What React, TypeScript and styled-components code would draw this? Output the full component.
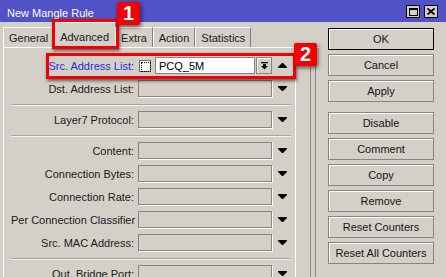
import React from 'react';
import styled, { createGlobalStyle } from 'styled-components';

const Global = createGlobalStyle`
  html, body { margin: 0; padding: 0; background: #d4d0c8; }
  body { font-family: "Liberation Sans", Arial, sans-serif; font-size: 11px; }
  * { box-sizing: border-box; }
`;

const Window = styled.div`
  position: relative;
  width: 446px;
  height: 277px;
  overflow: hidden;
  background: #d4d0c8;
  display: flex;
  flex-direction: column;
`;

const TitleBar = styled.div`
  flex: none;
  height: 22px;
  background: #5151c8;
  color: #fff;
  display: flex;
  align-items: center;
  padding: 0 8px 0 7px;
`;

const Title = styled.div`
  flex: 1;
  font-size: 11px;
  padding-top: 4px;
`;

const WinButtons = styled.div`
  display: flex;
  gap: 4px;
  margin-top: 1px;
`;

const WinButton = styled.div`
  width: 14px;
  height: 13px;
  background: #d4d0c8;
  border: 1px solid #000;
  display: flex;
  align-items: center;
  justify-content: center;
`;

const Body = styled.div`
  flex: 1;
  display: flex;
  padding-left: 3px;
  min-height: 0;
`;

const LeftCol = styled.div`
  width: 316px;
  display: flex;
  flex-direction: column;
`;

const TabStrip = styled.div`
  height: 25px;
  display: flex;
  align-items: flex-end;
  position: relative;
  z-index: 1;
`;

const Tab = styled.div<{ $active?: boolean }>`
  height: ${(p) => (p.$active ? '26px' : '20px')};
  margin: ${(p) => (p.$active ? '0 -1px -1px -1px' : '0')};
  padding: ${(p) => (p.$active ? '3px 6px 0' : '1px 5px 0')};
  border-top: 1px solid #fff;
  border-left: 1px solid #fff;
  border-right: 1px solid #808080;
  background: #d4d0c8;
  color: #1a1a1a;
  display: flex;
  align-items: center;
  white-space: nowrap;
  font-size: 11px;
`;

const Panel = styled.div`
  flex: 1;
  display: flex;
  border-top: 1px solid #fff;
  border-left: 1px solid #fff;
  min-height: 0;
`;

const FormArea = styled.div`
  width: 292px;
  border-right: 1px solid #fff;
  padding: 6px 0 0 7px;
  display: flex;
  flex-direction: column;
`;

const ScrollTrack = styled.div`
  width: 15px;
  border-right: 1px solid #8c8c8c;
`;

const PanelRim = styled.div`
  width: 5px;
  border-right: 1px solid #8c8c8c;
`;

const Row = styled.div`
  height: 23px;
  flex: none;
  display: flex;
  align-items: center;
`;

const Label = styled.div<{ $active?: boolean }>`
  width: 123px;
  text-align: right;
  white-space: nowrap;
  color: ${(p) => (p.$active ? '#2a2ae0' : '#1a1a1a')};
  margin-right: 4px;
  padding-top: 1px;
`;

const Field = styled.div`
  width: 134px;
  height: 17px;
  border: 1px solid #858585;
  box-shadow: 1px 1px 0 #fff;
  background: #d4d0c8;
`;

const FieldGroup = styled.div`
  width: 134px;
  height: 17px;
  display: flex;
  align-items: center;
`;

const CheckBox = styled.div`
  width: 12px;
  height: 12px;
  margin-left: 1px;
  background: #fff;
  border: 1px solid #707070;
  padding: 1px;
  &::after {
    content: '';
    display: block;
    width: 100%;
    height: 100%;
    border: 1px dotted #000;
  }
`;

const TextInput = styled.div`
  width: 100px;
  height: 17px;
  margin-left: 4px;
  background: #fff;
  border: 1px solid #858585;
  padding-left: 3px;
  display: flex;
  align-items: center;
  color: #000;
`;

const DropButton = styled.div`
  width: 16px;
  height: 17px;
  margin-left: 1px;
  border: 1px solid #858585;
  box-shadow: inset 1px 1px 0 #fff;
  background: #d4d0c8;
  display: flex;
  align-items: center;
  justify-content: center;
`;

const ArrowCell = styled.div`
  width: 20px;
  display: flex;
  align-items: center;
  justify-content: center;
`;

const Separator = styled.div`
  flex: none;
  margin: 4px 4px 2px 0;
  height: 2px;
  border-top: 1px solid #aaa69e;
  border-bottom: 1px solid #f4f2ee;
`;

const RightCol = styled.div`
  width: 106px;
  margin-left: 9px;
  padding-top: 6px;
  display: flex;
  flex-direction: column;
  gap: 4px;
`;

const Button = styled.div<{ $default?: boolean; $spaced?: boolean }>`
  height: 22px;
  flex: none;
  border: 1px solid ${(p) => (p.$default ? '#000' : '#858585')};
  box-shadow: inset 1px 1px 0 #fff;
  background: #d4d0c8;
  color: #141414;
  display: flex;
  align-items: center;
  justify-content: center;
  margin-top: ${(p) => (p.$spaced ? '6px' : '0')};
  font-size: 11px;
`;

const Highlight = styled.div<{ $x: number; $y: number; $w: number; $h: number }>`
  position: absolute;
  left: ${(p) => p.$x}px;
  top: ${(p) => p.$y}px;
  width: ${(p) => p.$w}px;
  height: ${(p) => p.$h}px;
  border: 3px solid #f40000;
  box-shadow: 1px 2px 3px rgba(0, 0, 0, 0.55);
  z-index: 5;
`;

const Badge = styled.div<{ $x: number; $y: number }>`
  position: absolute;
  left: ${(p) => p.$x}px;
  top: ${(p) => p.$y}px;
  width: 23px;
  height: 23px;
  background: #f40000;
  border-radius: 2px;
  color: #fff;
  font-family: "Liberation Sans", Arial, sans-serif;
  font-weight: bold;
  font-size: 20px;
  display: flex;
  align-items: center;
  justify-content: center;
  box-shadow: 1px 2px 4px rgba(0, 0, 0, 0.6);
  z-index: 6;
`;

const DownArrow = () => (
  <svg width="9" height="5" viewBox="0 0 9 5">
    <polygon points="0,0 9,0 9,1 5,5 4,5 0,1" fill="#000" />
  </svg>
);

const UpArrow = () => (
  <svg width="9" height="5" viewBox="0 0 9 5">
    <polygon points="0,5 9,5 9,4 5,0 4,0 0,4" fill="#000" />
  </svg>
);

const DropIcon = () => (
  <svg width="7" height="8" viewBox="0 0 7 8">
    <rect x="0" y="0" width="7" height="1.3" fill="#000" />
    <rect x="2" y="2" width="3" height="2" fill="#000" />
    <polygon points="0,4 7,4 3.5,7.5" fill="#000" />
  </svg>
);

const MaxIcon = () => (
  <svg width="9" height="8" viewBox="0 0 9 8">
    <rect x="0.5" y="0.5" width="8" height="7" fill="none" stroke="#000" />
    <rect x="0" y="0" width="9" height="2" fill="#000" />
  </svg>
);

const CloseIcon = () => (
  <svg width="8" height="7" viewBox="0 0 8 7">
    <path d="M0.5 0.5 L7.5 6.5 M7.5 0.5 L0.5 6.5" stroke="#000" strokeWidth="1.8" />
  </svg>
);

type Item = { kind: 'row'; label: string } | { kind: 'sep' };

const items: Item[] = [
  { kind: 'row', label: 'Dst. Address List:' },
  { kind: 'sep' },
  { kind: 'row', label: 'Layer7 Protocol:' },
  { kind: 'sep' },
  { kind: 'row', label: 'Content:' },
  { kind: 'row', label: 'Connection Bytes:' },
  { kind: 'row', label: 'Connection Rate:' },
  { kind: 'row', label: 'Per Connection Classifier' },
  { kind: 'row', label: 'Src. MAC Address:' },
  { kind: 'sep' },
  { kind: 'row', label: 'Out. Bridge Port:' },
];

const tabs = ['General', 'Advanced', 'Extra', 'Action', 'Statistics'];

const buttons = [
  'OK',
  'Cancel',
  'Apply',
  'Disable',
  'Comment',
  'Copy',
  'Remove',
  'Reset Counters',
  'Reset All Counters',
];

export default function App() {
  return (
    <>
      <Global />
      <Window>
        <TitleBar>
          <Title>New Mangle Rule</Title>
          <WinButtons>
            <WinButton>
              <MaxIcon />
            </WinButton>
            <WinButton>
              <CloseIcon />
            </WinButton>
          </WinButtons>
        </TitleBar>
        <Body>
          <LeftCol>
            <TabStrip>
              {tabs.map((t) => (
                <Tab key={t} $active={t === 'Advanced'}>
                  {t}
                </Tab>
              ))}
            </TabStrip>
            <Panel>
              <FormArea>
                <Row>
                  <Label $active>Src. Address List:</Label>
                  <FieldGroup>
                    <CheckBox />
                    <TextInput>PCQ_5M</TextInput>
                    <DropButton>
                      <DropIcon />
                    </DropButton>
                  </FieldGroup>
                  <ArrowCell>
                    <UpArrow />
                  </ArrowCell>
                </Row>
                {items.map((it, i) =>
                  it.kind === 'sep' ? (
                    <Separator key={i} />
                  ) : (
                    <Row key={i}>
                      <Label>{it.label}</Label>
                      <Field />
                      <ArrowCell>
                        <DownArrow />
                      </ArrowCell>
                    </Row>
                  )
                )}
              </FormArea>
              <ScrollTrack />
              <PanelRim />
            </Panel>
          </LeftCol>
          <RightCol>
            {buttons.map((b) => (
              <Button key={b} $default={b === 'OK'} $spaced={b === 'Disable'}>
                {b}
              </Button>
            ))}
          </RightCol>
        </Body>
        <Highlight $x={52} $y={19} $w={67} $h={30} />
        <Highlight $x={46} $y={53} $w={250} $h={26} />
        <Badge $x={117} $y={2}>1</Badge>
        <Badge $x={294} $y={43}>2</Badge>
      </Window>
    </>
  );
}
